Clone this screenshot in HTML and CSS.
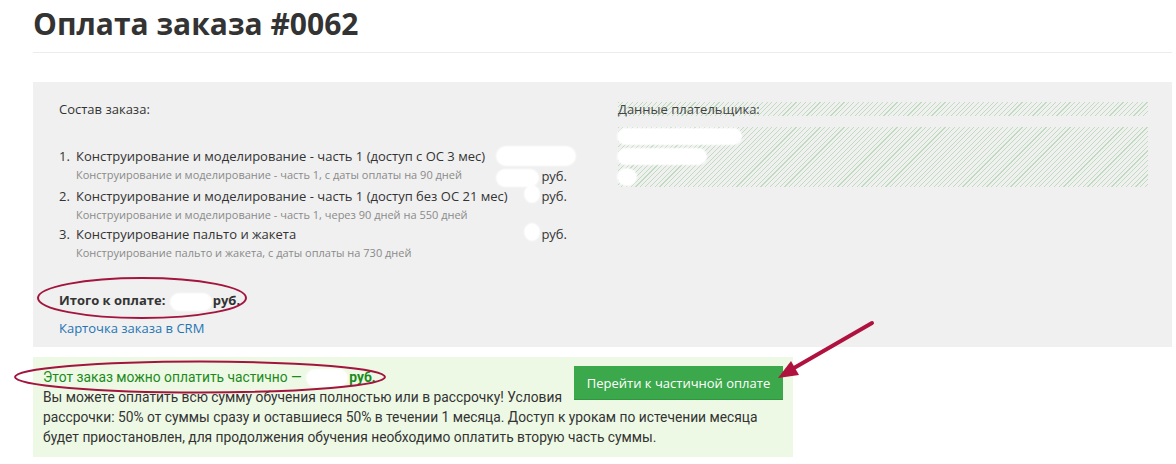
FILE: index.html
```html
<!DOCTYPE html>
<html>

<head>
    <meta charset="utf-8">
    <title>Оплата заказа #0062</title>
    <link rel="stylesheet" href="styles.css">
</head>

<body>
    <div class="screen">
        <div class="page">
            <h1 class="page-title">Оплата заказа #0062</h1>

            <div class="order-panel">
                <div class="order-col">
                    <div class="section-label">Состав заказа:</div>
                    <ol class="items">
                        <li class="item">
                            <span class="num">1.</span>
                            <div class="item-body">
                                <div class="item-title">Конструирование и моделирование - часть 1 (доступ с ОС 3 мес)</div>
                                <div class="item-sub">Конструирование и моделирование - часть 1, с даты оплаты на 90 дней</div>
                            </div>
                            <div class="price price-split">
                                <span class="blob blob-wide"></span>
                                <span><span class="blob blob-mid"></span>руб.</span>
                            </div>
                        </li>
                        <li class="item">
                            <span class="num">2.</span>
                            <div class="item-body">
                                <div class="item-title">Конструирование и моделирование - часть 1 (доступ без ОС 21 мес)</div>
                                <div class="item-sub">Конструирование и моделирование - часть 1, через 90 дней на 550 дней</div>
                            </div>
                            <div class="price"><span class="blob blob-dot"></span>руб.</div>
                        </li>
                        <li class="item">
                            <span class="num">3.</span>
                            <div class="item-body">
                                <div class="item-title">Конструирование пальто и жакета</div>
                                <div class="item-sub">Конструирование пальто и жакета, с даты оплаты на 730 дней</div>
                            </div>
                            <div class="price"><span class="blob blob-dot"></span>руб.</div>
                        </li>
                    </ol>
                    <div class="total">Итого к оплате: <span class="blob blob-total"></span>руб.</div>
                    <a class="crm-link" href="#">Карточка заказа в CRM</a>
                </div>

                <div class="payer-col">
                    <div class="payer-label hatch">Данные плательщика:</div>
                    <div class="payer-data hatch">
                        <span class="blob blob-name"></span>
                        <span class="blob blob-mail"></span>
                        <span class="blob blob-dot"></span>
                    </div>
                </div>
            </div>

            <div class="partial">
                <button class="partial-btn">Перейти к частичной оплате</button>
                <div class="partial-note">Этот заказ можно оплатить частично — <span class="blob blob-total"></span><b>руб.</b></div>
                <p class="partial-text">Вы можете оплатить всю сумму обучения полностью или в рассрочку! Условия рассрочки: 50% от суммы сразу и оставшиеся 50% в течении 1 месяца. Доступ к урокам по истечении месяца будет приостановлен, для продолжения обучения необходимо оплатить вторую часть суммы.</p>
            </div>
        </div>

        <!-- red marks drawn over the screenshot -->
        <svg class="marks" width="1176" height="464" viewBox="0 0 1176 464">
            <ellipse cx="142" cy="298" rx="104" ry="20" />
            <ellipse cx="200" cy="377" rx="185" ry="15.5" />
            <line x1="872" y1="323" x2="794" y2="368" />
            <polygon points="778,378 791,361 799,375" />
        </svg>
    </div>
</body>

</html>
```

FILE: styles.css
```css
body {
    margin: 0;
    font-family: "Open Sans", sans-serif;
    color: #333;
    background: #fff;
}

.screen {
    position: relative;
    width: 1176px;
    height: 464px;
    overflow: hidden;
}

.page {
    margin-left: 33px;
    width: 1139px;
}

.page-title {
    margin: 0;
    padding-top: 5px;
    height: 53px;
    box-sizing: border-box;
    border-bottom: 1px solid #ececec;
    font-size: 30px;
    line-height: 38px;
    font-weight: 700;
    color: #333;
}

.order-panel {
    margin-top: 29px;
    height: 265px;
    box-sizing: border-box;
    background: #f0f0f0;
    padding: 18px 24px 0 26px;
    display: grid;
    grid-template-columns: 508px 1fr;
    column-gap: 51px;
    font-size: 13px;
}

.section-label {
    line-height: 18px;
}

.items {
    list-style: none;
    margin: 28px 0 0;
    padding: 0;
}

.item {
    display: grid;
    grid-template-columns: 17px 1fr auto;
}

.num,
.item-title {
    line-height: 20px;
}

.item-sub {
    font-size: 11px;
    line-height: 18px;
    color: #8a8a8a;
}

.price {
    line-height: 20px;
    display: flex;
    align-items: flex-start;
    justify-content: flex-end;
}

.price-split {
    flex-direction: column;
    align-items: flex-end;
}

.blob {
    display: inline-block;
    vertical-align: middle;
    background: #fff;
    border-radius: 9px;
    box-shadow: 0 0 2px 1px #fff;
    height: 16px;
}

.blob-wide {
    width: 78px;
    height: 18px;
    margin: 1px -8px 1px 0;
}

.blob-mid {
    width: 41px;
    margin-right: 3px;
}

.blob-dot {
    width: 14px;
    height: 16px;
    border-radius: 50%;
    margin-right: 2px;
}

.total {
    margin-top: 29px;
    line-height: 18px;
    font-weight: 700;
}

.blob-total {
    width: 40px;
    margin: 0 2px;
}

.crm-link {
    display: inline-block;
    margin-top: 9px;
    line-height: 18px;
    color: #1f75b4;
    text-decoration: none;
}

.payer-col {
    padding-top: 2px;
}

.hatch {
    background: repeating-linear-gradient(135deg, #bfdcbf 0 0.8px, transparent 0.8px 3.4px);
}

.payer-label {
    height: 14px;
    line-height: 14px;
    color: #444;
}

.payer-data {
    margin-top: 11px;
    height: 60px;
    padding-top: 2px;
    box-sizing: border-box;
    display: flex;
    flex-direction: column;
    align-items: flex-start;
    gap: 5px;
}

.blob-name {
    width: 123px;
    height: 15px;
}

.blob-mail {
    width: 88px;
    height: 15px;
}

.payer-data .blob-dot {
    width: 18px;
}

.partial {
    margin-top: 10px;
    width: 760px;
    height: 100px;
    box-sizing: border-box;
    padding: 10px;
    background: #eef9e5;
    font-family: Roboto, sans-serif;
    font-size: 13.8px;
    line-height: 20px;
}

.partial-btn {
    float: right;
    margin: -1px 0 4px 6px;
    width: 209px;
    height: 34px;
    border: 0;
    border-bottom: 1px solid #2f9640;
    background: #3ba84b;
    color: #fff;
    font-family: "Open Sans", sans-serif;
    font-size: 13px;
    cursor: pointer;
}

.partial-note {
    color: #1c8a1c;
}

.partial-text {
    margin: 0;
}

.marks {
    position: absolute;
    left: 0;
    top: 0;
    pointer-events: none;
}

.marks ellipse {
    fill: none;
    stroke: #a3153e;
    stroke-width: 2;
}

.marks line {
    stroke: #b0123f;
    stroke-width: 4;
    stroke-linecap: round;
}

.marks polygon {
    fill: #b0123f;
}
```
